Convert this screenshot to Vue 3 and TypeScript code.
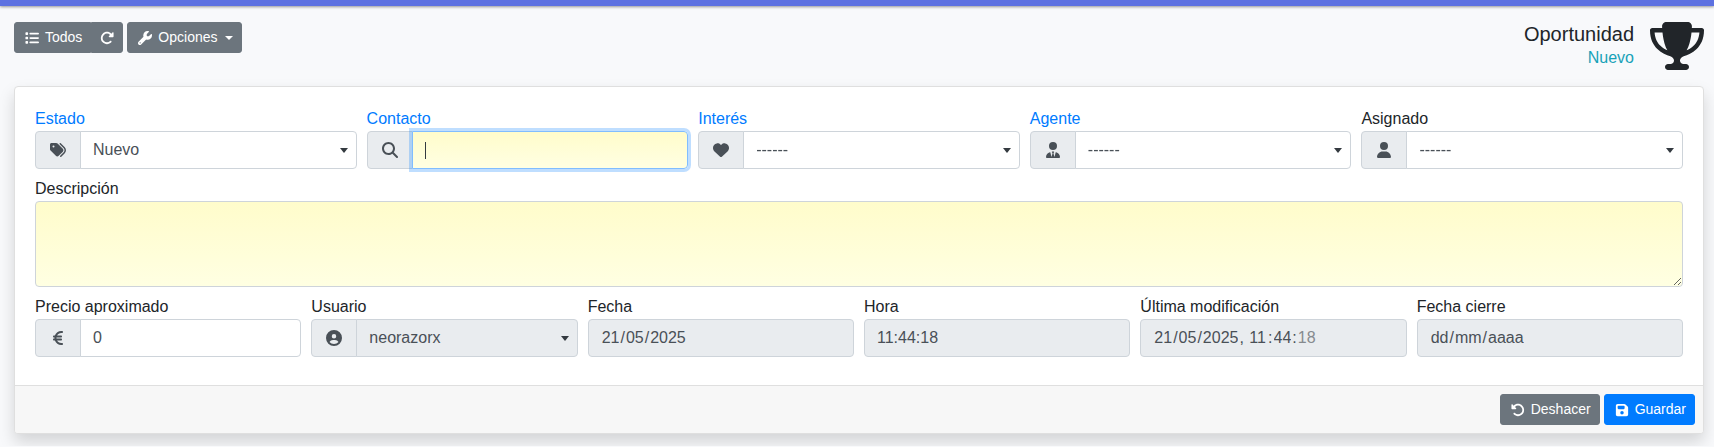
<script setup lang="ts">
import { onMounted, ref } from 'vue'

interface Icon {
  w: number
  d: string
}

interface SelectField {
  id: string
  label: string
  icon: Icon
  value: string
  link?: boolean
  kind: 'select' | 'search'
}

interface Segment {
  text: string
  after: string
  hint: string
  muted?: boolean
}

const icons: Record<string, Icon> = {
  list: { w: 512, d: 'M40 48C26.7 48 16 58.7 16 72v48c0 13.3 10.7 24 24 24H88c13.3 0 24-10.7 24-24V72c0-13.3-10.7-24-24-24H40zM192 64c-17.7 0-32 14.3-32 32s14.3 32 32 32H480c17.7 0 32-14.3 32-32s-14.3-32-32-32H192zm0 160c-17.7 0-32 14.3-32 32s14.3 32 32 32H480c17.7 0 32-14.3 32-32s-14.3-32-32-32H192zm0 160c-17.7 0-32 14.3-32 32s14.3 32 32 32H480c17.7 0 32-14.3 32-32s-14.3-32-32-32H192zM16 232v48c0 13.3 10.7 24 24 24H88c13.3 0 24-10.7 24-24V232c0-13.3-10.7-24-24-24H40c-13.3 0-24 10.7-24 24zM40 368c-13.3 0-24 10.7-24 24v48c0 13.3 10.7 24 24 24H88c13.3 0 24-10.7 24-24V392c0-13.3-10.7-24-24-24H40z' },
  reload: { w: 512, d: 'M463.5 224H472c13.3 0 24-10.7 24-24V72c0-9.7-5.8-18.5-14.8-22.2s-19.3-1.7-26.2 5.2L413.4 96.6c-87.6-86.5-228.7-86.2-315.8 1c-87.5 87.5-87.5 229.3 0 316.8s229.3 87.5 316.8 0c12.5-12.5 12.5-32.8 0-45.3s-32.8-12.5-45.3 0c-62.5 62.5-163.8 62.5-226.3 0s-62.5-163.8 0-226.3c62.2-62.2 162.7-62.5 225.3-1L327 183c-6.9 6.9-8.9 17.2-5.2 26.2s12.5 14.8 22.2 14.8H463.5z' },
  undo: { w: 512, d: 'M48.5 224H40c-13.3 0-24-10.7-24-24V72c0-9.7 5.8-18.5 14.8-22.2s19.3-1.7 26.2 5.2L98.6 96.6c87.6-86.5 228.7-86.2 315.8 1c87.5 87.5 87.5 229.3 0 316.8s-229.3 87.5-316.8 0c-12.5-12.5-12.5-32.8 0-45.3s32.8-12.5 45.3 0c62.5 62.5 163.8 62.5 226.3 0s62.5-163.8 0-226.3c-62.2-62.2-162.7-62.5-225.3-1L185 183c6.9 6.9 8.9 17.2 5.2 26.2s-12.5 14.8-22.2 14.8H48.5z' },
  wrench: { w: 512, d: 'M352 320c88.4 0 160-71.6 160-160c0-15.3-2.2-30.1-6.2-44.2c-3.1-10.8-16.4-13.2-24.3-5.3l-76.8 76.8c-3 3-7.1 4.7-11.3 4.7H336c-8.8 0-16-7.2-16-16V118.6c0-4.2 1.7-8.3 4.7-11.3l76.8-76.8c7.9-7.9 5.4-21.2-5.3-24.3C382.1 2.2 367.3 0 352 0C263.6 0 192 71.6 192 160c0 19.1 3.4 37.5 9.5 54.5L19.9 396.1C7.2 408.8 0 426.1 0 444.1C0 481.6 30.4 512 67.9 512c18 0 35.3-7.2 48-19.9L297.5 310.5c17 6.2 35.4 9.5 54.5 9.5zM80 408a24 24 0 1 1 0 48 24 24 0 1 1 0-48z' },
  tags: { w: 512, d: 'M345 39.1L472.8 168.4c52.4 53 52.4 138.2 0 191.2L360.8 472.9c-9.3 9.4-24.5 9.5-33.9 .2s-9.5-24.5-.2-33.9L438.6 325.9c33.9-34.3 33.9-89.4 0-123.7L310.9 72.9c-9.3-9.4-9.2-24.6 .2-33.9s24.6-9.2 33.9 .2zM0 229.5V80C0 53.5 21.5 32 48 32H197.5c17 0 33.3 6.7 45.3 18.7l168 168c25 25 25 65.5 0 90.5L277.3 442.7c-25 25-65.5 25-90.5 0l-168-168C6.7 262.7 0 246.5 0 229.5zM144 144a32 32 0 1 0 -64 0 32 32 0 1 0 64 0z' },
  search: { w: 512, d: 'M416 208c0 45.9-14.9 88.3-40 122.7L502.6 457.4c12.5 12.5 12.5 32.8 0 45.3s-32.8 12.5-45.3 0L330.7 376c-34.4 25.2-76.8 40-122.7 40C93.1 416 0 322.9 0 208S93.1 0 208 0S416 93.1 416 208zM208 352a144 144 0 1 0 0-288 144 144 0 1 0 0 288z' },
  heart: { w: 512, d: 'M47.6 300.4L228.3 469.1c7.5 7 17.4 10.9 27.7 10.9s20.2-3.9 27.7-10.9L464.4 300.4c30.4-28.3 47.6-68 47.6-109.5v-5.8c0-69.9-50.5-129.5-119.4-141C347 36.5 300.6 51.4 268 84L256 96 244 84c-32.6-32.6-79-47.5-124.6-39.9C50.5 55.6 0 115.2 0 185.1v5.8c0 41.5 17.2 81.2 47.6 109.5z' },
  userTie: { w: 448, d: 'M96 128a128 128 0 1 0 256 0A128 128 0 1 0 96 128zm94.5 200.2l18.6 31L175.8 483.1l-36-146.9c-2-8.1-9.8-13.4-17.9-11.3C51.9 342.4 0 405.8 0 481.3c0 17 13.8 30.7 30.7 30.7H162.5H417.3c17 0 30.7-13.8 30.7-30.7c0-75.5-51.9-138.9-121.9-156.4c-8.1-2-15.9 3.3-17.9 11.3l-36 146.9L238.9 359.2l18.6-31c6.4-10.7-1.3-24.2-13.7-24.2H224 204.3c-12.4 0-20.1 13.6-13.7 24.2z' },
  user: { w: 448, d: 'M224 256A128 128 0 1 0 224 0a128 128 0 1 0 0 256zm-45.7 48C79.8 304 0 383.8 0 482.3C0 498.7 13.3 512 29.7 512H418.3c16.4 0 29.7-13.3 29.7-29.7C448 383.8 368.2 304 269.7 304H178.3z' },
  euro: { w: 320, d: 'M48.1 240c-.1 2.7-.1 5.3-.1 8v16c0 2.7 0 5.3 .1 8H32c-17.7 0-32 14.3-32 32s14.3 32 32 32H60.3C89.9 419.9 170 480 264 480h24c17.7 0 32-14.3 32-32s-14.3-32-32-32H264c-57.9 0-108.2-32.4-133.9-80H256c17.7 0 32-14.3 32-32s-14.3-32-32-32H112.2c-.1-2.6-.2-5.3-.2-8V248c0-2.7 .1-5.4 .2-8H256c17.7 0 32-14.3 32-32s-14.3-32-32-32H130.1c25.7-47.6 76-80 133.9-80h24c17.7 0 32-14.3 32-32s-14.3-32-32-32H264C170 32 89.9 92.1 60.3 176H32c-17.7 0-32 14.3-32 32s14.3 32 32 32H48.1z' },
  account: { w: 512, d: 'M399 384.2C376.9 345.8 335.4 320 288 320H224c-47.4 0-88.9 25.8-111 64.2c35.2 39.2 86.2 63.8 143 63.8s107.8-24.7 143-63.8zM0 256a256 256 0 1 1 512 0A256 256 0 1 1 0 256zm256 16a72 72 0 1 0 0-144 72 72 0 1 0 0 144z' },
  save: { w: 448, d: 'M64 32C28.7 32 0 60.7 0 96V416c0 35.3 28.7 64 64 64H384c35.3 0 64-28.7 64-64V173.3c0-17-6.7-33.3-18.7-45.3L352 50.7C340 38.7 323.7 32 306.7 32H64zm0 96c0-17.7 14.3-32 32-32H288c17.7 0 32 14.3 32 32v64c0 17.7-14.3 32-32 32H96c-17.7 0-32-14.3-32-32V128zM224 288a64 64 0 1 1 0 128 64 64 0 1 1 0-128z' },
}

const mainFields: SelectField[] = [
  { id: 'estado', label: 'Estado', icon: icons.tags, value: 'Nuevo', link: true, kind: 'select' },
  { id: 'contacto', label: 'Contacto', icon: icons.search, value: '', link: true, kind: 'search' },
  { id: 'interes', label: 'Interés', icon: icons.heart, value: '------', link: true, kind: 'select' },
  { id: 'agente', label: 'Agente', icon: icons.userTie, value: '------', link: true, kind: 'select' },
  { id: 'asignado', label: 'Asignado', icon: icons.user, value: '------', kind: 'select' },
]

const fecha: Segment[] = [
  { text: '21', after: '/', hint: 'día' },
  { text: '05', after: '/', hint: 'mes' },
  { text: '2025', after: '', hint: 'año' },
]
const modificacion: Segment[] = [
  { text: '21', after: '/', hint: 'día' },
  { text: '05', after: '/', hint: 'mes' },
  { text: '2025', after: ', ', hint: 'año' },
  { text: '11', after: ':', hint: 'hora' },
  { text: '44', after: ':', hint: 'minuto' },
  { text: '18', after: '', hint: 'segundo', muted: true },
]
const cierre: Segment[] = [
  { text: 'dd', after: '/', hint: 'día' },
  { text: 'mm', after: '/', hint: 'mes' },
  { text: 'aaaa', after: '', hint: 'año' },
]

const dateFields = {
  fecha: { id: 'fecha', label: 'Fecha', parts: fecha },
  modificacion: { id: 'modificacion', label: 'Última modificación', parts: modificacion },
  cierre: { id: 'cierre', label: 'Fecha cierre', parts: cierre },
}
const lastDates = [dateFields.modificacion, dateFields.cierre]

// The letter m is one and a half digits wide.
function segmentWidth(text: string): string {
  return `${[...text].reduce((sum, c) => sum + (c === 'm' ? 1.5 : 1), 0)}ch`
}

const contact = ref<HTMLInputElement[]>([])
onMounted(() => contact.value[0]?.focus())
</script>

<template>
  <div class="topbar"></div>
  <main class="page">
    <header class="header">
      <div class="toolbar">
        <div class="group">
          <a class="btn" href="#todos">
            <svg class="icon-sm" viewBox="0 0 512 512"><path :d="icons.list.d" /></svg>Todos
          </a>
          <a class="btn" href="#recargar" aria-label="Recargar">
            <svg class="icon-only" viewBox="0 0 512 512"><path :d="icons.reload.d" /></svg>
          </a>
        </div>
        <button type="button" class="btn">
          <svg class="icon-sm" viewBox="0 0 512 512"><path :d="icons.wrench.d" /></svg>Opciones
          <span class="btn-caret"></span>
        </button>
      </div>
      <div class="title">
        <div class="title-text">
          <h1>Oportunidad</h1>
          <p>Nuevo</p>
        </div>
        <svg class="trophy" viewBox="0 0 576 512">
          <path d="M400 0H176c-26.5 0-48.1 21.8-47.1 48.2c.2 5.3 .4 10.6 .7 15.8H24C10.7 64 0 74.7 0 88c0 92.6 33.5 157 78.5 200.7c44.3 43.1 98.3 64.8 138.1 75.8c23.4 6.5 39.4 26 39.4 45.6c0 20.9-17 37.9-37.9 37.9H192c-17.7 0-32 14.3-32 32s14.3 32 32 32H384c17.7 0 32-14.3 32-32s-14.3-32-32-32H357.9C337 448 320 431 320 410.1c0-19.6 15.9-39.2 39.4-45.6c39.9-11 93.9-32.7 138.2-75.8C542.5 245 576 180.6 576 88c0-13.3-10.7-24-24-24H446.4c.3-5.2 .5-10.4 .7-15.8C448.1 21.8 426.5 0 400 0zM48.9 112h84.4c9.1 90.1 29.2 150.3 51.9 190.6c-24.9-11-50.8-26.5-73.2-48.3c-32-31.1-58-76-63-142.3zM464.1 254.3c-22.4 21.8-48.3 37.3-73.2 48.3c22.7-40.3 42.8-100.5 51.9-190.6h84.4c-5.1 66.3-31.1 111.2-63 142.3z" />
        </svg>
      </div>
    </header>

    <form class="card" @submit.prevent>
      <div class="card-body">
        <div class="row five">
          <div v-for="f in mainFields" :key="f.id" class="field">
            <label :for="f.id"><a v-if="f.link" :href="'#' + f.id">{{ f.label }}</a><template v-else>{{ f.label }}</template></label>
            <div class="input-group">
              <span class="addon">
                <svg class="icon" :viewBox="`0 0 ${f.icon.w} 512`"><path :d="f.icon.d" /></svg>
              </span>
              <div v-if="f.kind === 'select'" class="select-wrap">
                <select :id="f.id" class="control joined">
                  <option>{{ f.value }}</option>
                </select>
                <span class="arrow"></span>
              </div>
              <div v-else class="search-wrap">
                <input :id="f.id" ref="contact" type="text" class="control joined tinted" autocomplete="off" />
                <span class="text-caret"></span>
              </div>
            </div>
          </div>
        </div>

        <div class="field">
          <label for="descripcion">Descripción</label>
          <textarea id="descripcion" class="control tinted" rows="3"></textarea>
        </div>

        <div class="row six">
          <div class="field">
            <label for="precio">Precio aproximado</label>
            <div class="input-group">
              <span class="addon">
                <svg class="icon" viewBox="0 0 320 512"><path :d="icons.euro.d" /></svg>
              </span>
              <input id="precio" type="text" inputmode="decimal" class="control joined" value="0" />
            </div>
          </div>
          <div class="field">
            <label for="usuario">Usuario</label>
            <div class="input-group">
              <span class="addon">
                <svg class="icon" viewBox="0 0 512 512"><path :d="icons.account.d" /></svg>
              </span>
              <div class="select-wrap">
                <select id="usuario" class="control joined" disabled>
                  <option>neorazorx</option>
                </select>
                <span class="arrow"></span>
              </div>
            </div>
          </div>
          <div class="field">
            <label for="fecha">{{ dateFields.fecha.label }}</label>
            <div class="control segments" role="group" aria-label="Fecha">
              <template v-for="(s, i) in fecha" :key="i">
                <input :id="i ? undefined : 'fecha'" type="text" readonly :value="s.text" :aria-label="s.hint" :style="{ width: segmentWidth(s.text) }" /><span v-if="s.after">{{ s.after }}</span>
              </template>
            </div>
          </div>
          <div class="field">
            <label for="hora">Hora</label>
            <input id="hora" type="text" class="control" readonly value="11:44:18" />
          </div>
          <div v-for="f in lastDates" :key="f.id" class="field">
            <label :for="f.id">{{ f.label }}</label>
            <div class="control segments" role="group" :aria-label="f.label">
              <template v-for="(s, i) in f.parts" :key="i">
                <input :id="i ? undefined : f.id" type="text" readonly :class="{ muted: s.muted }" :value="s.text" :aria-label="s.hint" :style="{ width: segmentWidth(s.text) }" /><span v-if="s.after">{{ s.after }}</span>
              </template>
            </div>
          </div>
        </div>
      </div>
      <footer class="card-footer">
        <button type="reset" class="btn">
          <svg class="icon-sm" viewBox="0 0 512 512"><path :d="icons.undo.d" /></svg>Deshacer
        </button>
        <button type="submit" class="btn primary">
          <svg class="icon-sm" viewBox="0 0 448 512"><path :d="icons.save.d" /></svg>Guardar
        </button>
      </footer>
    </form>
  </main>
</template>

<style>
body {
  margin: 0;
  background: #f8f9fb;
}
</style>

<style scoped>
* {
  box-sizing: border-box;
}

.topbar {
  height: 6px;
  background: #5d71e1;
  box-shadow: 0 1px 3px rgba(0, 0, 0, 0.4);
}

.page {
  padding: 16px 10px 12px 14px;
  font-family: "Liberation Sans", Arial, sans-serif;
  font-size: 16px;
  line-height: 24px;
  color: #212529;
}

svg {
  display: block;
  fill: currentColor;
}

.header {
  display: flex;
  justify-content: space-between;
  align-items: flex-start;
  margin-bottom: 16px;
}

.toolbar {
  display: flex;
  gap: 4px;
}

.group {
  display: flex;
}

.group .btn:first-child {
  border-top-right-radius: 0;
  border-bottom-right-radius: 0;
}

.group .btn:last-child {
  border-top-left-radius: 0;
  border-bottom-left-radius: 0;
}

.btn {
  display: flex;
  align-items: center;
  gap: 4px;
  padding: 4px 8px;
  border: 1px solid #6c757d;
  border-radius: 3px;
  background: #6c757d;
  color: #fff;
  font-family: inherit;
  font-size: 14px;
  line-height: 21px;
  text-decoration: none;
  cursor: pointer;
}

.btn.primary {
  background: #007bff;
  border-color: #007bff;
}

.icon-sm {
  width: 18px;
  height: 14px;
}

.icon-only {
  width: 14px;
  height: 14px;
}

.btn-caret {
  margin-left: 3px;
  border: 4px solid transparent;
  border-top-color: currentColor;
  border-bottom: 0;
}

.title {
  display: flex;
  gap: 16px;
  text-align: right;
}

h1 {
  margin: 0;
  font-size: 20px;
  font-weight: 400;
  line-height: 24px;
}

.title-text p {
  margin: 0;
  color: #17a2b8;
}

.trophy {
  width: 54px;
  height: 48px;
}

.card {
  border: 1px solid #dfdfdf;
  border-radius: 4px;
  background: #fff;
  box-shadow: 0 8px 16px rgba(0, 0, 0, 0.15);
}

.card-body {
  display: grid;
  gap: 8px;
  padding: 20px 20px 28px;
}

.row {
  display: grid;
  gap: 10px;
}

.five {
  grid-template-columns: repeat(5, minmax(0, 1fr));
}

.six {
  grid-template-columns: repeat(6, minmax(0, 1fr));
}

label {
  display: block;
}

label a {
  color: #007bff;
  text-decoration: none;
}

.input-group {
  display: flex;
}

.addon {
  display: flex;
  align-items: center;
  padding: 0 12px;
  border: 1px solid #ced4da;
  border-radius: 4px 0 0 4px;
  background: #e9ecef;
  color: #495057;
}

.icon {
  width: 20px;
  height: 16px;
}

.control {
  display: block;
  width: 100%;
  height: 38px;
  padding: 6px 12px;
  border: 1px solid #ced4da;
  border-radius: 4px;
  background: #fff;
  color: #495057;
  font-family: inherit;
  font-size: 16px;
  line-height: 24px;
  outline: none;
  appearance: none;
}

.control:disabled,
.control:read-only:not(select),
.segments {
  background: #e9ecef;
  opacity: 1;
}

.control.tinted {
  background: linear-gradient(#fffccb, #ffffe2);
}

.joined {
  border-top-left-radius: 0;
  border-bottom-left-radius: 0;
}

textarea.control {
  height: auto;
  resize: vertical;
}

input.tinted:focus {
  border-color: #80bdff;
  box-shadow: 0 0 0 3px rgba(0, 123, 255, 0.25);
  caret-color: transparent;
}

.select-wrap,
.search-wrap,
.input-group > .control {
  position: relative;
  flex: 1;
  min-width: 0;
  margin-left: -1px;
}

.arrow {
  position: absolute;
  top: 17px;
  right: 9px;
  border: 4px solid transparent;
  border-top: 5px solid #343a40;
  border-bottom: 0;
  pointer-events: none;
}

.text-caret {
  position: absolute;
  top: 11px;
  left: 13px;
  width: 1px;
  height: 17px;
  background: #343a40;
  display: none;
  pointer-events: none;
}

input:focus + .text-caret {
  display: block;
}

.segments {
  display: flex;
  white-space: pre;
}

.segments input {
  box-sizing: content-box;
  height: 24px;
  padding: 0 1px;
  border: 0;
  background: none;
  color: inherit;
  font: inherit;
  outline: none;
}

.segments input.muted {
  color: #868a8e;
}

.card-footer {
  display: flex;
  justify-content: flex-end;
  gap: 4px;
  padding: 8px;
  border-top: 1px solid #dfdfdf;
  border-radius: 0 0 3px 3px;
  background: #f7f7f7;
}
</style>
